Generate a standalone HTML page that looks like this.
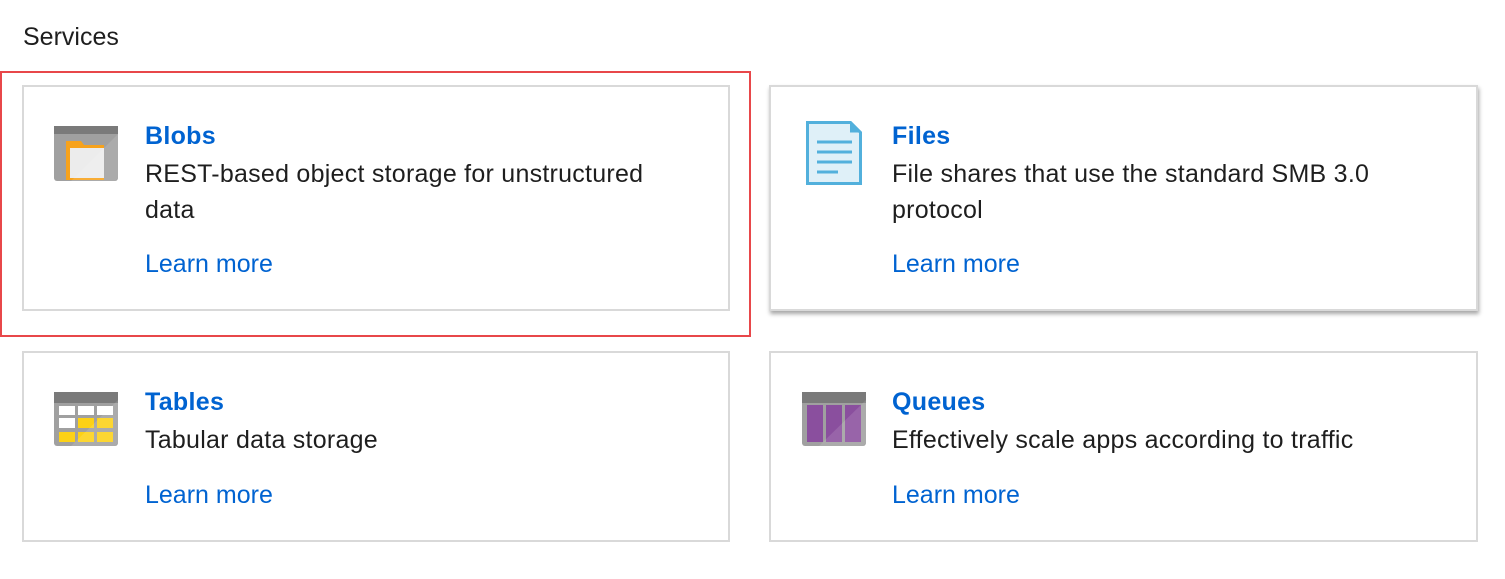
<!DOCTYPE html>
<html><head><style>
body{margin:0;width:1505px;height:579px;background:#fff;font-family:"Liberation Sans",sans-serif;position:relative;overflow:hidden}
.t{position:absolute;white-space:nowrap}
.card{position:absolute;border:2px solid #d9d9d9;box-sizing:border-box;background:#fff}
.h{font-size:25px;font-weight:bold;color:#0063d1;letter-spacing:0.3px}
.d{font-size:25px;color:#1e1e1e;line-height:36px;letter-spacing:0.25px}
.l{font-size:25px;color:#0063d1}
</style></head><body>
<div class="t" style="left:23px;top:23px;font-size:25px;color:#1e1e1e">Services</div>
<div style="position:absolute;left:0;top:71px;width:751px;height:266px;border:2px solid #e8474a;box-sizing:border-box"></div>
<div class="card" style="left:22px;top:85px;width:708px;height:226px"></div>
<div class="card" style="left:769px;top:85px;width:709px;height:226px;box-shadow:1px 3px 4px rgba(0,0,0,.35)"></div>
<div class="card" style="left:22px;top:351px;width:708px;height:191px"></div>
<div class="card" style="left:769px;top:351px;width:709px;height:191px"></div>

<svg style="position:absolute;left:54px;top:126px" width="64" height="56">
<rect width="64" height="55" rx="3" fill="#a0a0a0"/><rect width="64" height="8" fill="#7a7a7a"/>
<path d="M12 15h15l3 4h20v35H12z" fill="#f7a21b"/><rect x="16" y="22" width="34" height="30" fill="#ececec"/>
<path d="M64 8L17 55h44l3-3z" fill="#fff" opacity=".12"/></svg>

<svg style="position:absolute;left:806px;top:121px" width="56" height="64">
<path d="M1.5 1.5h43l10 10v51h-53z" fill="#dff0f8" stroke="#52b0dc" stroke-width="3"/>
<path d="M44 1.5v10h10z" fill="#52b0dc"/>
<g stroke="#52b0dc" stroke-width="3"><path d="M11 21h35M11 31h35M11 41h35M11 51h21"/></g></svg>

<svg style="position:absolute;left:54px;top:392px" width="64" height="54">
<rect width="64" height="54" rx="3" fill="#a0a0a0"/><rect width="64" height="11" fill="#7a7a7a"/>
<g fill="#fff"><rect x="5" y="14" width="16" height="9"/><rect x="24" y="14" width="16" height="9"/><rect x="43" y="14" width="16" height="9"/><rect x="5" y="26" width="16" height="10"/></g>
<g fill="#fcd116"><rect x="24" y="26" width="16" height="10"/><rect x="43" y="26" width="16" height="10"/><rect x="5" y="40" width="16" height="10"/><rect x="24" y="40" width="16" height="10"/><rect x="43" y="40" width="16" height="10"/></g>
<path d="M64 8L17 54h44l3-3z" fill="#fff" opacity=".12"/></svg>

<svg style="position:absolute;left:802px;top:392px" width="64" height="54">
<rect width="64" height="54" rx="3" fill="#a0a0a0"/><rect width="64" height="11" fill="#7a7a7a"/>
<g fill="#8a4f9e"><rect x="5" y="13" width="16" height="37"/><rect x="24" y="13" width="16" height="37"/><rect x="43" y="13" width="16" height="37"/></g>
<path d="M64 8L17 54h44l3-3z" fill="#fff" opacity=".12"/></svg>

<div class="t h" style="left:145px;top:122px">Blobs</div>
<div class="t d" style="left:145px;top:156px">REST-based object storage for unstructured<br>data</div>
<div class="t l" style="left:145px;top:250px">Learn more</div>

<div class="t h" style="left:892px;top:122px">Files</div>
<div class="t d" style="left:892px;top:156px">File shares that use the standard SMB 3.0<br>protocol</div>
<div class="t l" style="left:892px;top:250px">Learn more</div>

<div class="t h" style="left:145px;top:388px">Tables</div>
<div class="t d" style="left:145px;top:422px">Tabular data storage</div>
<div class="t l" style="left:145px;top:481px">Learn more</div>

<div class="t h" style="left:892px;top:388px">Queues</div>
<div class="t d" style="left:892px;top:422px">Effectively scale apps according to traffic</div>
<div class="t l" style="left:892px;top:481px">Learn more</div>
</body></html>
